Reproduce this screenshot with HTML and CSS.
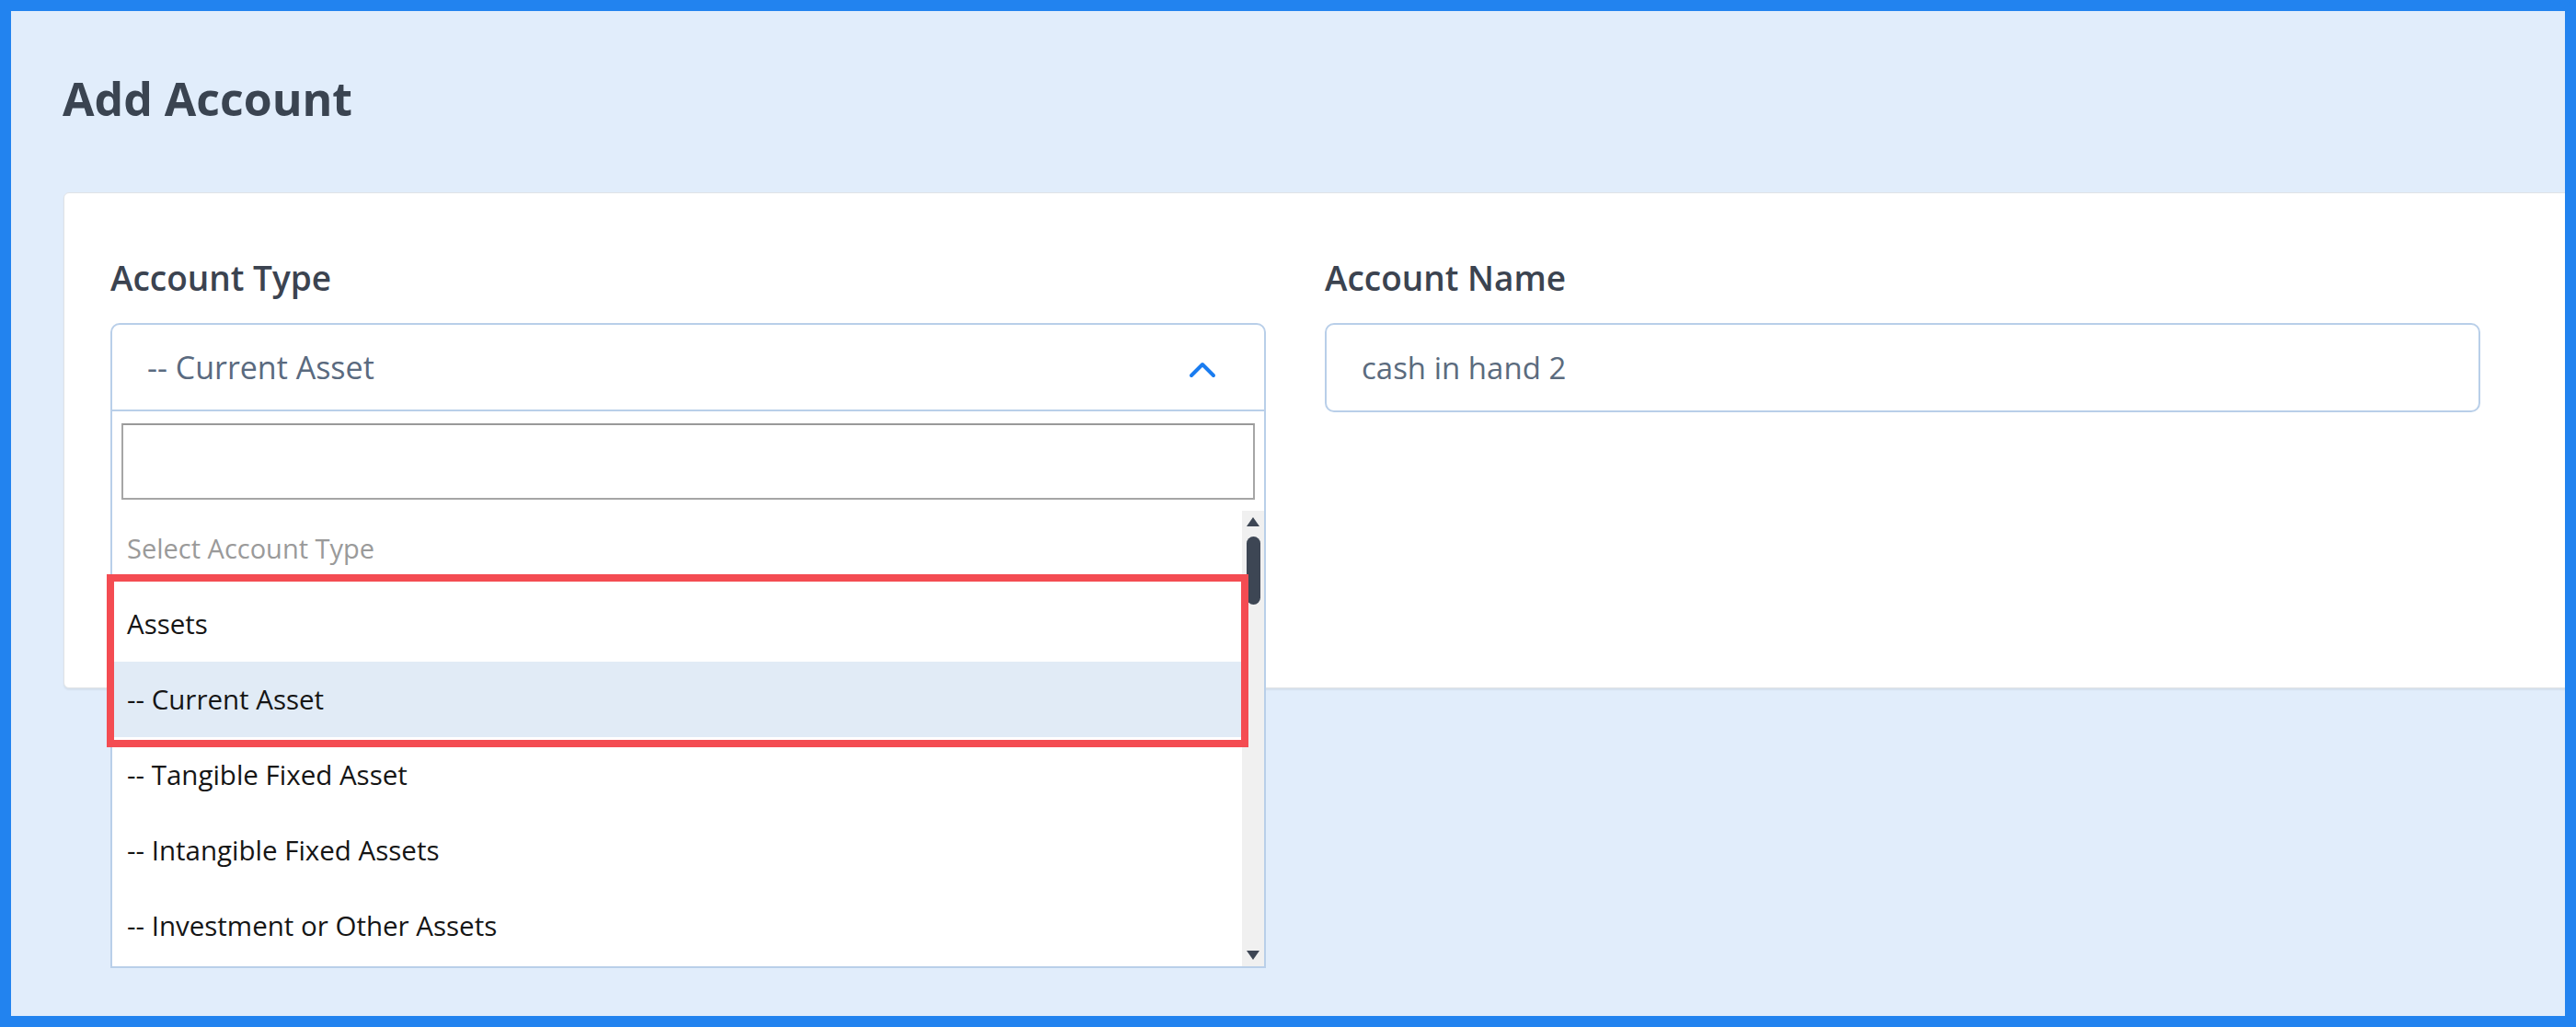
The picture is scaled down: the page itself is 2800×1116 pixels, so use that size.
FILE: index.html
```html
<!DOCTYPE html>
<html lang="en">
<head>
    <meta charset="UTF-8">
    <meta name="viewport" content="width=device-width, initial-scale=1.0">
    <title>Add Account</title>
    <link rel="stylesheet" href="styles.css">
</head>
<body>
    <div class="frame">
        <div class="page">
            <h1>Add Account</h1>

            <div class="card">
                <div class="fields">
                    <div class="field">
                        <label>Account Type</label>
                        <div class="select-wrap">
                            <div class="select-box">
                                <span>-- Current Asset</span>
                                <svg class="chevron" width="30" height="18" viewBox="0 0 30 18">
                                    <polyline points="3,15 15,3 27,15" fill="none" stroke="#1a7cf0" stroke-width="4" stroke-linecap="round" stroke-linejoin="round"/>
                                </svg>
                            </div>

                            <!-- open dropdown -->
                            <div class="dropdown">
                                <div class="search-row">
                                    <div class="search-box"></div>
                                </div>
                                <div class="list-wrap">
                                    <ul class="options">
                                        <li class="placeholder">Select Account Type</li>
                                        <li>Assets</li>
                                        <li class="selected">-- Current Asset</li>
                                        <li>-- Tangible Fixed Asset</li>
                                        <li>-- Intangible Fixed Assets</li>
                                        <li>-- Investment or Other Assets</li>
                                    </ul>
                                    <div class="scrollbar">
                                        <span class="arrow-up"></span>
                                        <span class="thumb"></span>
                                        <span class="spacer"></span>
                                        <span class="arrow-down"></span>
                                    </div>
                                </div>
                                <div class="highlight"></div>
                            </div>
                        </div>
                    </div>

                    <div class="field">
                        <label>Account Name</label>
                        <div class="text-input">cash in hand 2</div>
                    </div>
                </div>
            </div>
        </div>
    </div>
</body>
</html>
```

FILE: styles.css
```css
html, body {
    margin: 0;
    padding: 0;
}
body {
    font-family: "Open Sans", "Noto Sans", sans-serif;
    background-color: #2283ef;
}
.frame {
    width: 2800px;
    height: 1116px;
    box-sizing: border-box;
    border: 12px solid #2283ef;
    background-color: #e1edfb;
    overflow: hidden;
}
.page {
    padding: 63px 0 0 56px;
}
h1 {
    margin: 0 0 70px 0;
    font-size: 50px;
    line-height: 64px;
    font-weight: 700;
    color: #3a4451;
}
.card {
    background-color: #fff;
    border: 1px solid #e0e3e6;
    border-radius: 6px;
    box-shadow: 0 2px 2px rgba(0, 0, 0, 0.06);
    height: 539px;
    box-sizing: border-box;
    margin: 0 -80px 0 1px;
    padding: 67px 0 0 50px;
}
.fields {
    display: grid;
    grid-template-columns: 1256px 1256px;
    column-gap: 64px;
}
.field label {
    display: block;
    font-size: 37px;
    line-height: 50px;
    font-weight: 600;
    color: #3b4350;
    margin-bottom: 24px;
}
.select-wrap {
    position: relative;
}
.select-box {
    height: 96px;
    box-sizing: border-box;
    border: 2px solid #b9cfe9;
    border-radius: 10px 10px 0 0;
    display: flex;
    align-items: center;
    justify-content: space-between;
    padding: 0 52px 0 38px;
    font-size: 34px;
    color: #5a6a7f;
}
.chevron {
    margin-top: 6px;
}
.dropdown {
    position: absolute;
    top: 96px;
    left: 0;
    right: 0;
    background-color: #fff;
    border: 2px solid #b9cfe9;
    border-top: none;
    z-index: 10;
}
.search-row {
    padding: 13px 10px 0 10px;
}
.search-box {
    height: 83px;
    box-sizing: border-box;
    border: 2px solid #a6a6a6;
    border-top-color: #999;
}
.list-wrap {
    display: flex;
    margin-top: 12px;
    height: 495px;
    overflow: hidden;
}
.options {
    list-style: none;
    margin: 0;
    padding: 0;
    flex: 1;
}
.options li {
    height: 82px;
    line-height: 82px;
    padding-left: 16px;
    font-size: 29.5px;
    color: #151515;
}
.options li.placeholder {
    font-size: 29px;
    color: #9a9a9a;
}
.options li.selected {
    background-color: #e1ebf6;
}
.scrollbar {
    width: 24px;
    background-color: #f0f0f0;
    display: flex;
    flex-direction: column;
    align-items: center;
}
.arrow-up {
    margin-top: 7px;
    border-left: 7px solid transparent;
    border-right: 7px solid transparent;
    border-bottom: 10px solid #3d4654;
}
.thumb {
    margin-top: 11px;
    width: 15px;
    height: 74px;
    border-radius: 8px;
    background-color: #3d4654;
}
.spacer {
    flex: 1;
}
.arrow-down {
    margin-bottom: 7px;
    border-left: 7px solid transparent;
    border-right: 7px solid transparent;
    border-top: 10px solid #3d4654;
}
.highlight {
    position: absolute;
    left: -6px;
    top: 177px;
    width: 1241px;
    height: 188px;
    box-sizing: border-box;
    border: 8px solid #f44c52;
}
.text-input {
    height: 97px;
    box-sizing: border-box;
    border: 2px solid #b9cfe9;
    border-radius: 10px;
    display: flex;
    align-items: center;
    padding-left: 38px;
    font-size: 33px;
    color: #5b6b7e;
}
```
